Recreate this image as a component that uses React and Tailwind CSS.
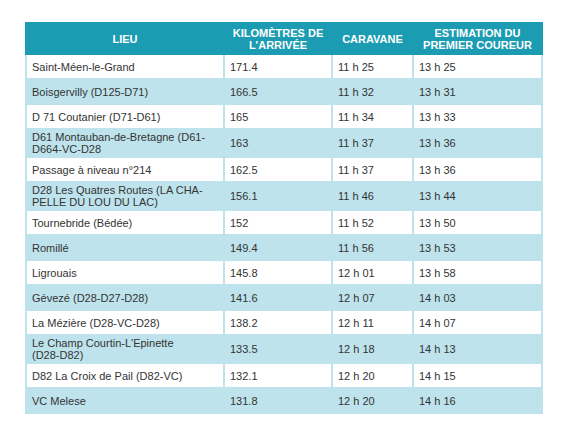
const rows = [
  [["Saint-Méen-le-Grand"], "171.4", "11 h 25", "13 h 25"],
  [["Boisgervilly (D125-D71)"], "166.5", "11 h 32", "13 h 31"],
  [["D 71 Coutanier (D71-D61)"], "165", "11 h 34", "13 h 33"],
  [["D61 Montauban-de-Bretagne (D61-", "D664-VC-D28"], "163", "11 h 37", "13 h 36"],
  [["Passage à niveau n°214"], "162.5", "11 h 37", "13 h 36"],
  [["D28 Les Quatres Routes (LA CHA-", "PELLE DU LOU DU LAC)"], "156.1", "11 h 46", "13 h 44"],
  [["Tournebride (Bédée)"], "152", "11 h 52", "13 h 50"],
  [["Romillé"], "149.4", "11 h 56", "13 h 53"],
  [["Ligrouais"], "145.8", "12 h 01", "13 h 58"],
  [["Gévezé (D28-D27-D28)"], "141.6", "12 h 07", "14 h 03"],
  [["La Mézière (D28-VC-D28)"], "138.2", "12 h 11", "14 h 07"],
  [["Le Champ Courtin-L'Epinette", "(D28-D82)"], "133.5", "12 h 18", "14 h 13"],
  [["D82 La Croix de Pail (D82-VC)"], "132.1", "12 h 20", "14 h 15"],
  [["VC Melese"], "131.8", "12 h 20", "14 h 16"],
];

export default function App() {
  return (
    <div className="w-[566px] h-[436px] bg-white pt-[22px] pl-[25px]" style={{ fontFamily: '"Liberation Sans", Arial, sans-serif' }}>
      <table className="table-fixed border-collapse w-[516px] text-[11px] leading-[12px] text-[#333]">
        <colgroup>
          <col className="w-[198px]" />
          <col className="w-[108px]" />
          <col className="w-[81px]" />
          <col className="w-[129px]" />
        </colgroup>
        <thead>
          <tr className="bg-[#1b9cb2] text-white h-[31px]">
            <th className="font-bold text-center px-1 border-2 border-[#1b9cb2]">LIEU</th>
            <th className="font-bold text-center px-1 border-2 border-[#1b9cb2]">KILOMÈTRES DE L'ARRIVÉE</th>
            <th className="font-bold text-center px-1 border-2 border-[#1b9cb2]">CARAVANE</th>
            <th className="font-bold text-center px-1 border-2 border-[#1b9cb2]">ESTIMATION DU PREMIER COUREUR</th>
          </tr>
        </thead>
        <tbody>
          {rows.map((r, i) => (
            <tr key={i} className={i % 2 === 1 ? "bg-[#bee3ec] h-[25px]" : "bg-white h-[25px]"}>
              <td className="border-2 border-[#bee3ec] pl-[5px] pr-1 py-[1px] align-middle">
                {r[0].map((line, k) => (
                  <div key={k}>{line}</div>
                ))}
              </td>
              {r.slice(1).map((c, j) => (
                <td key={j} className="border-2 border-[#bee3ec] pl-[5px] pr-1 py-0 align-middle">
                  {c}
                </td>
              ))}
            </tr>
          ))}
        </tbody>
      </table>
    </div>
  );
}
